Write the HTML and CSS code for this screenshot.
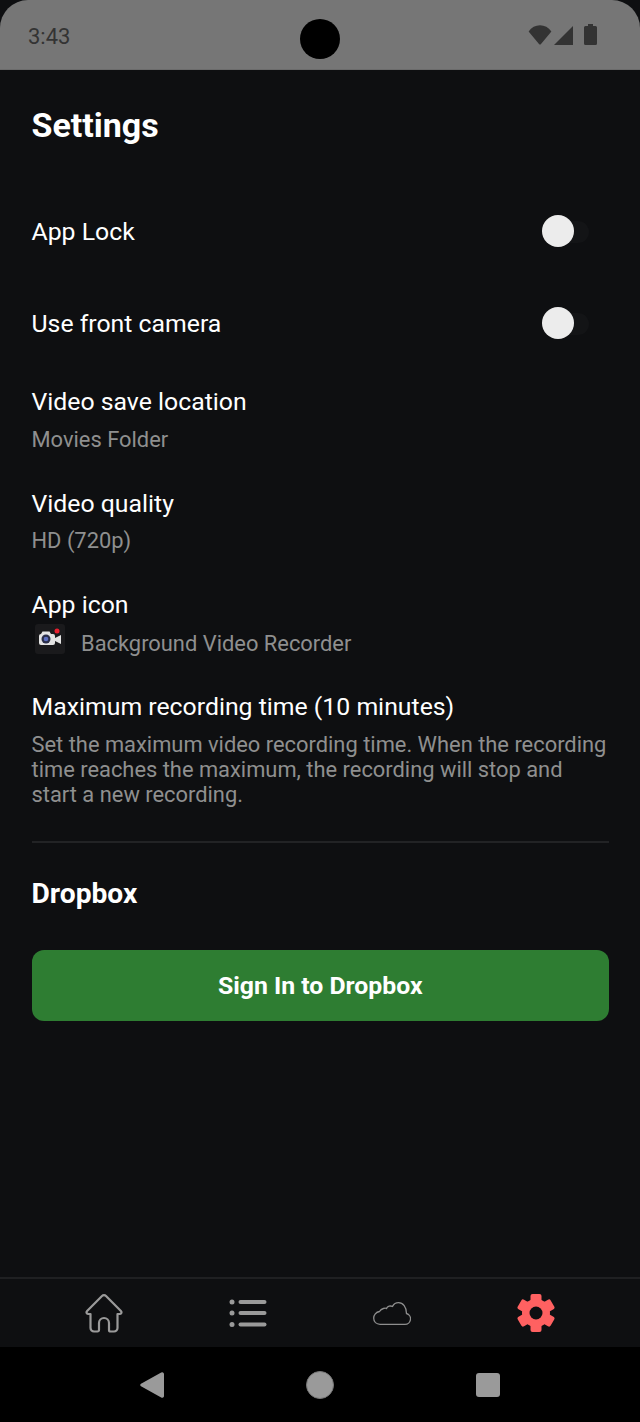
FILE: index.html
```html
<!DOCTYPE html>
<html lang="en">
<head>
  <meta charset="UTF-8" />
  <meta name="viewport" content="width=device-width, initial-scale=1" />
  <title>Settings</title>
  <link rel="stylesheet" href="styles.css">
</head>
<body>
  <div class="phone">
    <div class="status-bar">
      <span class="clock">3:43</span>
      <span class="camera"></span>
      <span class="status-icons">
        <svg width="24" height="20" viewBox="0 0 24 20"><path d="M0.600 6.500C3.500 2.500 7.500 0.300 12 0.300s8.500 2.200 11.400 6.200L13 19a1.300 1.300 0 0 1-2 0z" fill="#333"/></svg>
        <svg class="signal" width="19" height="19" viewBox="0 0 19 19"><path d="M19 0V19H0z" fill="#333"/></svg>
        <svg class="battery" width="13" height="21" viewBox="0 0 13 21"><path d="M4 0h5v2h2.500a1.500 1.500 0 0 1 1.500 1.500v16a1.500 1.500 0 0 1-1.500 1.500h-10a1.500 1.500 0 0 1-1.500-1.500v-16a1.500 1.500 0 0 1 1.500-1.500H4z" fill="#333"/></svg>
      </span>
    </div>

    <main class="content">
      <h1>Settings</h1>

      <div class="row row-lock">
        <span class="label">App Lock</span>
        <span class="switch"><span class="knob"></span></span>
      </div>
      <div class="row row-camera">
        <span class="label">Use front camera</span>
        <span class="switch"><span class="knob"></span></span>
      </div>

      <div class="item item-location">
        <div class="label">Video save location</div>
        <div class="sub">Movies Folder</div>
      </div>
      <div class="item item-quality">
        <div class="label">Video quality</div>
        <div class="sub">HD (720p)</div>
      </div>
      <div class="item item-icon">
        <div class="label">App icon</div>
        <div class="app-icon">
          <span class="icon-box">
            <svg width="30" height="30" viewBox="0 0 30 30">
              <rect x="4" y="10" width="16" height="11" rx="2" fill="#e4e4e4"/>
              <path d="M6 10l1.500-2.500h7L16 10z" fill="#e4e4e4"/>
              <path d="M20 14l6-3v9l-6-3z" fill="#e4e4e4"/>
              <circle cx="11" cy="15" r="4.500" fill="#2b2f4a"/>
              <circle cx="11" cy="15" r="2.300" fill="#5d6fc0"/>
              <circle cx="22" cy="7" r="2.500" fill="#e8202f"/>
            </svg>
          </span>
          <span class="sub">Background Video Recorder</span>
        </div>
      </div>
      <div class="item item-max">
        <div class="label">Maximum recording time (10 minutes)</div>
        <div class="sub desc">Set the maximum video recording time. When the recording time reaches the maximum, the recording will stop and start a new recording.</div>
      </div>

      <hr class="divider">

      <h2>Dropbox</h2>
      <button class="signin">Sign In to Dropbox</button>
    </main>

    <nav class="tabs">
      <svg class="tab" width="38" height="39" viewBox="0 0 38 39" fill="none" stroke="#9a9a9a" stroke-width="2.200" stroke-linejoin="round">
        <path d="M5.500 20H3.500c-1.800 0-2.600-1.800-1.400-3L17 2a2.800 2.800 0 0 1 4 0L35.900 17c1.200 1.200.4 3-1.400 3H32.500V34a3.500 3.500 0 0 1-3.500 3.500H25.500a1.500 1.500 0 0 1-1.500-1.500V29a5 5 0 0 0-10 0V36a1.500 1.500 0 0 1-1.500 1.500H9a3.500 3.500 0 0 1-3.500-3.500z"/>
      </svg>
      <svg class="tab" width="38" height="28" viewBox="0 0 38 28" fill="#9a9a9a">
        <circle cx="3" cy="3" r="2.500"/><circle cx="3" cy="14" r="2.500"/><circle cx="3" cy="25.500" r="2.500"/>
        <rect x="9.500" y="1" width="28" height="4" rx="2"/><rect x="9.500" y="12" width="28" height="4" rx="2"/><rect x="9.500" y="23.500" width="28" height="4" rx="2"/>
      </svg>
      <svg class="tab" width="38" height="23" viewBox="0 0 38 23" fill="none" stroke="#8e8e8e" stroke-width="1.300">
        <path d="M7 22.300H32a5.500 5.500 0 0 0 1.500-10.800C33.500 5 30 .7 25.500 .7C22.500 .7 20.500 2.500 19.500 4.500C17.500 3.500 14.500 4 13.500 6.500C12.500 6 8.500 6 6.500 9.500C3 10 .7 13 .7 16C.7 20 3.500 22.300 7 22.300z"/>
      </svg>
      <svg class="tab" width="38" height="38" viewBox="0 0 38 38">
        <g fill="#ff6161">
          <circle cx="19" cy="19" r="14"/>
          <rect x="13.500" y="0" width="11" height="38" rx="2"/>
          <rect x="13.500" y="0" width="11" height="38" rx="2" transform="rotate(60 19 19)"/>
          <rect x="13.500" y="0" width="11" height="38" rx="2" transform="rotate(120 19 19)"/>
        </g>
        <circle cx="19" cy="19" r="6.500" fill="#0e0f11"/>
      </svg>
    </nav>

    <div class="nav-bar">
      <svg width="24" height="26" viewBox="0 0 24 26"><path d="M24 2v22a1.800 1.800 0 0 1-2.800 1.500L1 14.300a1.500 1.500 0 0 1 0-2.600L21.200.5A1.800 1.800 0 0 1 24 2z" fill="#9a9a9a"/></svg>
      <span class="home-btn"></span>
      <span class="recent-btn"></span>
    </div>
  </div>
</body>
</html>
```

FILE: styles.css
```css
* {
  box-sizing: border-box;
}
html, body {
  margin: 0;
  padding: 0;
  background: #000;
}
body {
  font-family: Roboto, sans-serif;
  color: #fff;
}
.phone {
  width: 640px;
  height: 1422px;
  display: flex;
  flex-direction: column;
  background: #0e0f11;
  overflow: hidden;
}

/* status bar */
.status-bar {
  height: 70px;
  flex: none;
  position: relative;
  display: flex;
  align-items: center;
  justify-content: space-between;
  padding: 0 43px 0 28px;
  background: #767676;
  border-bottom: 1px solid #6b6b6b;
  border-radius: 28px 28px 0 0;
}
.clock {
  margin-top: 3px;
  font-size: 22px;
  color: #333;
}
.camera {
  position: absolute;
  left: 300px;
  top: 19px;
  width: 40px;
  height: 40px;
  border-radius: 50%;
  background: #000;
}
.status-icons {
  display: flex;
  align-items: flex-end;
}
.signal {
  margin-left: 2px;
}
.battery {
  margin-left: 11px;
}

/* content */
.content {
  flex: 1;
  padding: 0 31px 0 31.5px;
}
h1 {
  margin: 33px 0 0;
  font-size: 34px;
  line-height: 44px;
  font-weight: 700;
}
h2 {
  margin: 31px 0 0;
  font-size: 28.2px;
  line-height: 40px;
  font-weight: 700;
}
.label {
  font-size: 24.8px;
  line-height: 30px;
}
.sub {
  font-size: 21.88px;
  line-height: 25px;
  color: #8f8f8f;
}
.row {
  display: flex;
  align-items: center;
  justify-content: space-between;
}
.row-lock {
  margin-top: 70px;
}
.row-camera {
  margin-top: 62px;
}
.switch {
  position: relative;
  width: 47px;
  height: 22px;
  margin-right: 20px;
  border-radius: 11px;
  background: #131416;
}
.knob {
  position: absolute;
  left: 0;
  top: -6px;
  width: 32px;
  height: 32px;
  border-radius: 50%;
  background: #ececec;
}
.item-location {
  margin-top: 48px;
}
.item .sub {
  margin-top: 10px;
}
.item-quality {
  margin-top: 37px;
}
.item-quality .sub {
  margin-top: 9px;
}
.item-icon {
  margin-top: 37px;
}
.app-icon {
  display: flex;
  align-items: flex-start;
  gap: 16px;
  margin: 4px 0 0 3.5px;
}
.item .app-icon .sub {
  margin-top: 7px;
}
.icon-box {
  width: 30px;
  height: 30px;
  background: #1a1a1c;
  border-radius: 3px;
}
.icon-box svg {
  display: block;
}
.item-max {
  margin-top: 36px;
}
.divider {
  margin: 34px 0 0;
  border: none;
  border-top: 2px solid #222325;
}
.signin {
  display: block;
  width: 100%;
  height: 71px;
  margin-top: 36px;
  border: none;
  border-radius: 12px;
  background: #2e7d32;
  color: #fff;
  font-family: Roboto, sans-serif;
  font-size: 24.8px;
  font-weight: 700;
}

/* bottom tabs */
.tabs {
  height: 70px;
  flex: none;
  display: grid;
  grid-template-columns: repeat(4, 1fr);
  align-items: center;
  justify-items: center;
  padding: 0 31.5px;
  border-top: 2px solid #1f2022;
}

/* android nav */
.nav-bar {
  height: 75px;
  flex: none;
  display: flex;
  align-items: center;
  justify-content: center;
  gap: 142px;
  background: #000;
}
.home-btn {
  width: 28px;
  height: 28px;
  border-radius: 50%;
  background: #9a9a9a;
  border: 1px solid #777;
}
.recent-btn {
  width: 24px;
  height: 24px;
  border-radius: 3px;
  background: #9a9a9a;
}
```
